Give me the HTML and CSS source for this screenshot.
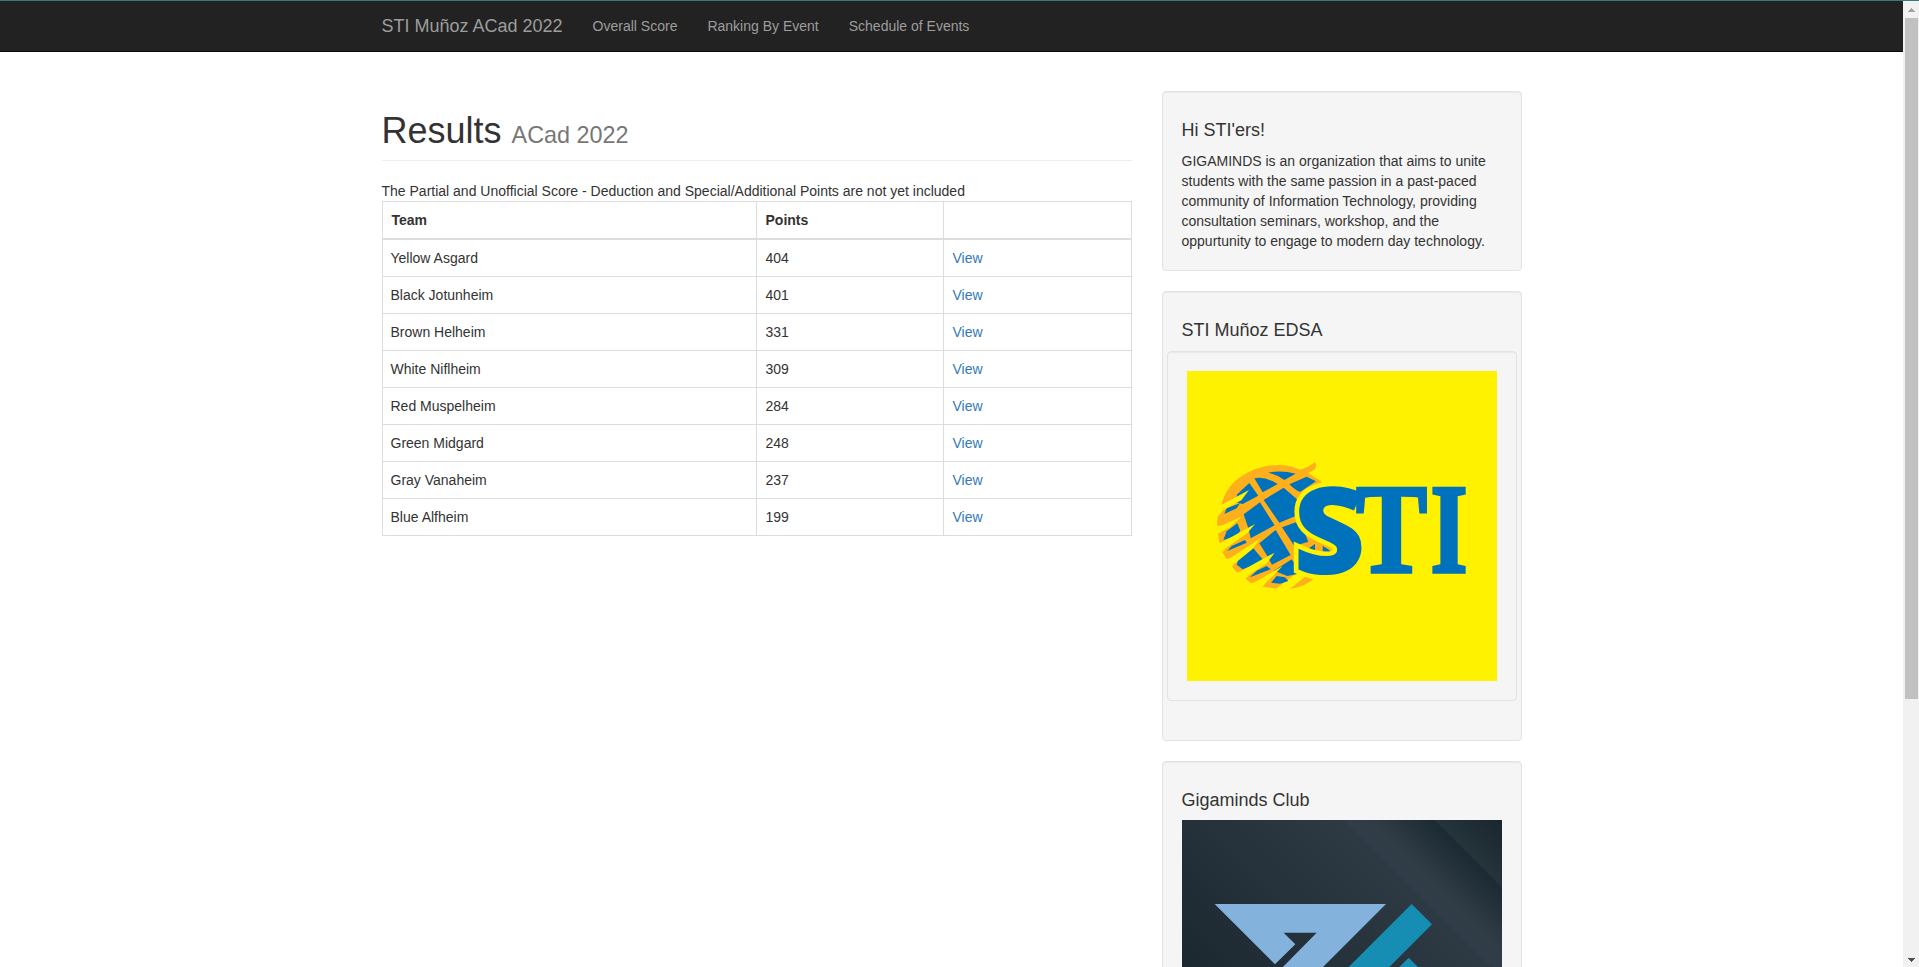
FILE: index.html
```html
<!DOCTYPE html>
<html lang="en">
<head>
<meta charset="utf-8">
<title>STI Muñoz ACad 2022</title>
<link rel="stylesheet" href="styles.css">
</head>
<body>
<div class="window">
  <div class="viewport">
    <nav class="navbar">
      <div class="container nav-row">
        <a class="brand">STI Muñoz ACad 2022</a>
        <a class="nav-link">Overall Score</a>
        <a class="nav-link">Ranking By Event</a>
        <a class="nav-link">Schedule of Events</a>
      </div>
    </nav>
    <div class="container columns">
      <main class="main">
        <h1 class="page-header">Results <small>ACad 2022</small></h1>
        <p class="note">The Partial and Unofficial Score - Deduction and Special/Additional Points are not yet included</p>
        <table class="table">
          <colgroup><col class="c-team"><col class="c-points"><col class="c-view"></colgroup>
          <thead><tr><th>Team</th><th>Points</th><th></th></tr></thead>
          <tbody>
            <tr><td>Yellow Asgard</td><td>404</td><td><a>View</a></td></tr>
            <tr><td>Black Jotunheim</td><td>401</td><td><a>View</a></td></tr>
            <tr><td>Brown Helheim</td><td>331</td><td><a>View</a></td></tr>
            <tr><td>White Niflheim</td><td>309</td><td><a>View</a></td></tr>
            <tr><td>Red Muspelheim</td><td>284</td><td><a>View</a></td></tr>
            <tr><td>Green Midgard</td><td>248</td><td><a>View</a></td></tr>
            <tr><td>Gray Vanaheim</td><td>237</td><td><a>View</a></td></tr>
            <tr><td>Blue Alfheim</td><td>199</td><td><a>View</a></td></tr>
          </tbody>
        </table>
      </main>
      <aside class="side">
        <section class="well">
          <h4>Hi STI'ers!</h4>
          <p class="about">GIGAMINDS is an organization that aims to unite students with the same passion in a past-paced community of Information Technology, providing consultation seminars, workshop, and the oppurtunity to engage to modern day technology.</p>
        </section>
        <section class="well">
          <h4>STI Muñoz EDSA</h4>
          <div class="well inner">
            <svg class="sti" viewBox="1187 371 310 310">
              <rect x="1187" y="371" width="310" height="310" fill="#fff200"/>
              <g transform="translate(1200 440) scale(.33333)">
                <path fill="#fdb01c" d="M65 195C80 120 160 74 240 75C265 76 285 82 300 89Q325 82 345 66Q352 78 343 89L325 100L362 123L420 330L400 355L290 400L228 446L188 440L215 405L155 430L137 417L165 385L112 398L96 380L120 345L80 358L68 338L85 310L58 308L54 280L85 255L52 258Q51 240 54 228L85 195Z"/>
                <path fill="#fdb01c" d="M345 412Q320 440 270 447L315 410Z"/>
                <g fill="#0072bc">
                  <path d="M205 98Q245 90 287 101L253 120Q230 104 205 98Z"/>
                  <path d="M268 133L320 110L348 124L300 156Q285 150 268 133Z"/>
                  <path d="M163 115Q195 108 233 132L188 157Z"/>
                  <path d="M148 129L175 167L128 192L105 187L112 163L125 150Z"/>
                  <path d="M191 180L251 143L294 180L287 228L238 248Z"/>
                  <path d="M73 222L80 205L120 190L110 205Z"/>
                  <path d="M131 223L180 187L224 256L152 295L146 268Z"/>
                  <path d="M70 300L80 274L112 250L121 272L110 287Z"/>
                  <path d="M246 262L300 242L325 305L283 318Z"/>
                  <path d="M178 310L227 270L272 345L216 374L200 345Z"/>
                  <path d="M82 333L95 318L135 300L140 308Z"/>
                  <path d="M110 374L118 347L160 325L188 358L150 380L128 388Z"/>
                  <path d="M150 412L170 392L200 378L212 388Z"/>
                  <path d="M213 428L230 408L255 412L265 423L240 431Z"/>
                  <path d="M222 392L275 358L292 382L292 402L262 408Z"/>
                  <path d="M305 340L345 312L345 355L310 352Z"/>
                  <path d="M368 318Q392 330 400 345L368 352Z"/>
                </g>
                <g fill="#fff200">
                  <path d="M60 197L147 150L124 181L74 208Z"/>
                  <path d="M50 263L125 230L90 262L52 281Z"/>
                  <path d="M55 313L165 252L143 278L66 333Z"/>
                  <path d="M76 364L182 295L155 329L92 380Z"/>
                  <path d="M107 402L224 338L200 370L133 414Z"/>
                  <path d="M152 434L248 378L218 409L186 438Z"/>
                </g>
              </g>
              <text class="sti-s" transform="translate(1293 573.5) scale(1.04 1)">S</text>
              <text class="sti-ti" transform="translate(1356 571.5) scale(.84 1)">T</text>
              <text class="sti-ti" transform="translate(1430.5 571.5) scale(.75 1)">I</text>
            </svg>
          </div>
        </section>
        <section class="well">
          <h4>Gigaminds Club</h4>
          <svg class="giga" viewBox="96 480 960 960">
            <defs>
              <linearGradient id="sheen" gradientUnits="userSpaceOnUse" x1="96" y1="900" x2="786" y2="210">
                <stop offset="0" stop-color="#1b2830"/>
                <stop offset=".35" stop-color="#25323b"/>
                <stop offset=".65" stop-color="#2d3a44"/>
                <stop offset=".665" stop-color="#313e49"/>
                <stop offset=".72" stop-color="#2f3c46"/>
                <stop offset=".85" stop-color="#1c2a33"/>
                <stop offset=".856" stop-color="#25333b"/>
                <stop offset="1" stop-color="#19262e"/>
              </linearGradient>
            </defs>
            <rect x="96" y="480" width="960" height="960" fill="url(#sheen)"/>
            <path fill="#83b2dd" d="M194 732H708L500 940H380L500 818H401L436 853L375 913Z"/>
            <path fill="#168db3" d="M785 732L846 793L698 941H576ZM776 893L826 943H726Z"/>
          </svg>
        </section>
      </aside>
    </div>
  </div>
  <div class="scrollbar">
    <svg class="arrow" viewBox="0 0 16 17"><path fill="#a3a3a3" d="M8 7h1v1h1v1h1v1h1v1H5v-1h1V9h1V8h1z"/></svg>
    <div class="thumb"></div>
    <svg class="arrow" viewBox="0 0 16 17"><path fill="#505050" d="M5 8h7v1h-1v1h-1v1H9v1H8v-1H7v-1H6V9H5z"/></svg>
  </div>
</div>
</body>
</html>
```
FILE: styles.css
```css
* { box-sizing: border-box; }
body {
  margin: 0;
  overflow: hidden;
  background: #fff;
  color: #333;
  font: 14px/20px "Liberation Sans", Arial, sans-serif;
}
.window {
  display: flex;
  height: 967px;
  border-top: 1px solid #35797c;
  overflow: hidden;
}
.viewport { flex: 1; overflow: hidden; }
.container { width: 1170px; margin: 0 auto; padding: 0 15px; }
.navbar { height: 51px; background: #222; border-bottom: 1px solid #080808; }
.nav-row { display: flex; }
.brand { padding: 15px 15px 15px 0; font-size: 18px; color: #9d9d9d; }
.nav-link { padding: 15px; color: #9d9d9d; }
.columns { display: flex; gap: 30px; padding-top: 39px; }
.main { width: 750px; }
.page-header {
  margin: 20px 0;
  padding-bottom: 9px;
  border-bottom: 1px solid #eee;
  font-size: 36px;
  font-weight: 500;
  line-height: 1.1;
}
.page-header small { font-size: 65%; font-weight: 400; line-height: 1; color: #777; }
.note { margin: 0; }
.table {
  width: 100%;
  table-layout: fixed;
  border-collapse: collapse;
  border: 1px solid #ddd;
}
.c-team { width: 374px; }
.c-points { width: 187px; }
.table th, .table td { padding: 8px; border: 1px solid #ddd; text-align: left; }
.table th { height: 37px; padding-left: 9px; border-bottom-width: 2px; }
.table td + td { padding-left: 9px; }
.table a { color: #337ab7; }
.side { width: 360px; }
.well {
  margin-bottom: 20px;
  padding: 19px;
  background: #f5f5f5;
  border: 1px solid #e3e3e3;
  border-radius: 4px;
  box-shadow: inset 0 1px 1px rgba(0, 0, 0, .05);
}
.well h4 { margin: 10px 0; font-size: 18px; font-weight: 500; line-height: 1.1; }
.about { margin: 0; }
.inner { margin: 0 -15px 20px; }
.sti { display: block; width: 310px; height: 310px; }
.sti-s {
  font: 800 121px "Open Sans", sans-serif;
  fill: #0072bc;
  stroke: #fff200;
  stroke-width: 9px;
  paint-order: stroke;
}
.sti-ti {
  font: 700 127px "Liberation Serif", serif;
  fill: #0072bc;
  stroke: #0072bc;
  stroke-width: 3.5px;
}
.giga { display: block; width: 320px; height: 320px; }
.scrollbar {
  display: flex;
  flex-direction: column;
  width: 16px;
  background: #f1f1f1;
}
.arrow { width: 16px; height: 17px; }
.arrow:last-child { margin-top: auto; }
.thumb { width: 13px; height: 681px; margin-left: 2px; background: #c1c1c1; }
```
